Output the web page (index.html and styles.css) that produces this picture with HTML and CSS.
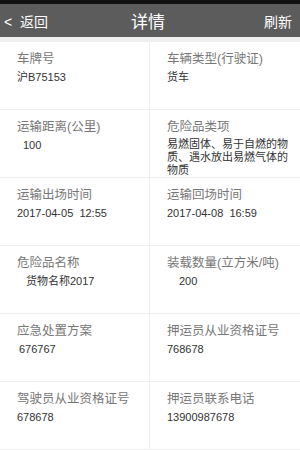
FILE: index.html
```html
<html>
<head>
    <meta charset="utf-8">
    <link rel="stylesheet" href="styles.css">
</head>
<body>
    <div class="status-bar"></div>
    <div class="header">
        <div class="back">&lt;&nbsp;&nbsp;返回</div>
        <div class="title">详情</div>
        <div class="refresh">刷新</div>
    </div>
    <div class="gap"></div>
    <div class="details">
        <div class="cell">
            <div class="label">车牌号</div>
            <div class="value">沪B75153</div>
        </div>
        <div class="cell">
            <div class="label">车辆类型(行驶证)</div>
            <div class="value">货车</div>
        </div>
        <div class="cell">
            <div class="label">运输距离(公里)</div>
            <div class="value indent-m">100</div>
        </div>
        <div class="cell">
            <div class="label">危险品类项</div>
            <div class="value multi">易燃固体、易于自燃的物质、遇水放出易燃气体的物质</div>
        </div>
        <div class="cell">
            <div class="label">运输出场时间</div>
            <div class="value">2017-04-05&nbsp;&nbsp;12:55</div>
        </div>
        <div class="cell">
            <div class="label">运输回场时间</div>
            <div class="value">2017-04-08&nbsp;&nbsp;16:59</div>
        </div>
        <div class="cell">
            <div class="label">危险品名称</div>
            <div class="value indent-l">货物名称2017</div>
        </div>
        <div class="cell">
            <div class="label">装载数量(立方米/吨)</div>
            <div class="value indent-xl">200</div>
        </div>
        <div class="cell">
            <div class="label">应急处置方案</div>
            <div class="value indent-s">676767</div>
        </div>
        <div class="cell">
            <div class="label">押运员从业资格证号</div>
            <div class="value">768678</div>
        </div>
        <div class="cell">
            <div class="label">驾驶员从业资格证号</div>
            <div class="value">678678</div>
        </div>
        <div class="cell">
            <div class="label">押运员联系电话</div>
            <div class="value">13900987678</div>
        </div>
    </div>
</body>
</html>
```

FILE: styles.css
```css
body {
    margin: 0;
    background-color: #ffffff;
    font-family: "Liberation Sans", "Noto Sans CJK SC", sans-serif;
}
.status-bar {
    height: 4px;
    background-color: #111;
}
.header {
    height: 33px;
    background-color: #5c5c5c;
    color: #ffffff;
    display: flex;
    align-items: center;
    justify-content: space-between;
    padding: 0 8px 0 4px;
}
.back {
    font-size: 14px;
    width: 60px;
}
.title {
    font-size: 17px;
}
.refresh {
    font-size: 14px;
    width: 60px;
    text-align: right;
}
.gap {
    height: 5px;
    background-color: #f0f0f0;
}
.details {
    display: grid;
    grid-template-columns: 150px 150px;
}
.cell {
    height: 68px;
    box-sizing: border-box;
    border-bottom: 1px solid #eeeeee;
    padding: 9px 0 0 17px;
    overflow: hidden;
}
.cell:nth-child(odd) {
    border-right: 1px solid #eeeeee;
}
.label {
    font-size: 12.5px;
    line-height: 16px;
    color: #777777;
}
.value {
    font-size: 11px;
    line-height: 14px;
    margin-top: 3px;
    color: #333333;
}
.multi {
    padding-right: 10px;
    line-height: 13px;
}
.indent-s {
    padding-left: 2px;
}
.indent-m {
    padding-left: 6px;
}
.indent-l {
    padding-left: 9px;
}
.indent-xl {
    padding-left: 12px;
}
```
